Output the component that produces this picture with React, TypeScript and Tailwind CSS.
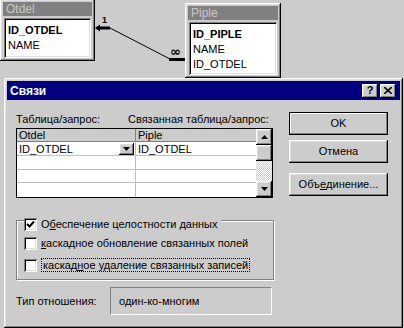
import React from 'react';

const raised = 'shadow-[inset_-1px_-1px_#000,inset_1px_1px_#fff,inset_-2px_-2px_#808080,inset_2px_2px_#dfdfdf]';
const sunken = 'shadow-[inset_1px_1px_#808080,inset_-1px_-1px_#fff,inset_2px_2px_#000,inset_-2px_-2px_#dfdfdf]';

const TableWindow: React.FC<{ title: string; fields: { name: string; key?: boolean }[]; className: string }> = ({ title, fields, className }) => (
  <div className={`absolute bg-[#cccccc] p-[3px] flex flex-col ${raised} ${className}`}>
    <div className="h-[14px] bg-[#808080] text-[#c8c8c8] text-[12px] leading-[14px] pl-[3px]">{title}</div>
    <div className={`mt-[2px] mx-[1px] flex-1 bg-white pt-[5px] pl-[4px] ${sunken}`}>
      {fields.map((f) => (
        <div key={f.name} className={`h-[15px] leading-[15px] text-[11px] text-black ${f.key ? 'font-bold' : ''}`}>
          {f.name}
        </div>
      ))}
    </div>
  </div>
);

const Checkbox: React.FC<{ checked?: boolean }> = ({ checked }) => (
  <div className={`w-[13px] h-[13px] bg-white shrink-0 flex items-center justify-center ${sunken}`}>
    {checked && (
      <svg width="9" height="9" viewBox="0 0 9 9">
        <polyline points="1,4 3.5,6.5 8,1.5" fill="none" stroke="#000" strokeWidth="2" />
      </svg>
    )}
  </div>
);

const Button: React.FC<{ children: React.ReactNode; isDefault?: boolean; className?: string }> = ({ children, isDefault, className = '' }) => (
  <div
    className={`h-[23px] w-[99px] flex items-center justify-center text-[11px] text-black ${
      isDefault ? 'border border-black shadow-[inset_-1px_-1px_#808080,inset_1px_1px_#fff]' : raised
    } ${className}`}
  >
    {children}
  </div>
);

export default function App() {
  return (
    <div className="w-[404px] h-[328px] bg-[#cccccc] overflow-hidden font-['Liberation_Sans',Arial,sans-serif] text-black">
      {/* relationship diagram */}
      <div className="relative h-[78px]">
        <TableWindow
          title="Otdel"
          className="left-0 -top-[1px] w-[95px] h-[62px]"
          fields={[{ name: 'ID_OTDEL', key: true }, { name: 'NAME' }]}
        />
        <TableWindow
          title="Piple"
          className="left-[185px] top-[3px] w-[96px] h-[75px]"
          fields={[{ name: 'ID_PIPLE', key: true }, { name: 'NAME' }, { name: 'ID_OTDEL' }]}
        />
        <svg className="absolute left-0 top-0" width="404" height="78">
          <polygon points="95,28 100,24.5 100,31.5" fill="#000" />
          <rect x="99" y="26.5" width="11" height="3" fill="#000" />
          <text x="102" y="23" fontSize="9" fontWeight="bold" fontFamily="Liberation Sans, Arial, sans-serif">1</text>
          <line x1="110" y1="28" x2="170" y2="59" stroke="#000" strokeWidth="1" />
          <rect x="169" y="58" width="16" height="3" fill="#000" />
          <text x="170" y="56" fontSize="13" fontWeight="bold" fontFamily="DejaVu Sans, sans-serif">∞</text>
        </svg>
      </div>

      {/* dialog */}
      <div className={`ml-[4px] w-[399px] h-[250px] p-[3px] bg-[#cccccc] ${raised}`}>
        <div className="h-[19px] bg-[#000080] flex items-center justify-between pl-[3px] pr-[4px]">
          <span className="text-white font-bold text-[12px]">Связи</span>
          <div className="flex gap-[2px]">
            <div className={`w-[16px] h-[14px] bg-[#cccccc] flex items-center justify-center text-[11px] font-bold leading-none ${raised}`}>?</div>
            <div className={`w-[16px] h-[14px] bg-[#cccccc] flex items-center justify-center ${raised}`}>
              <svg width="8" height="7" viewBox="0 0 8 7">
                <path d="M0 0 L8 7 M8 0 L0 7" stroke="#000" strokeWidth="1.6" />
              </svg>
            </div>
          </div>
        </div>

        <div className="flex pt-[12px] pl-[9px]">
          {/* left column */}
          <div className="w-[258px] flex flex-col">
            <div className="h-[14px] flex text-[11px] leading-[14px]">
              <span className="w-[112px]">Таблица/запрос:</span>
              <span>Связанная таблица/запрос:</span>
            </div>
            <div className="mt-[2px] w-[257px] h-[70px] border border-black flex bg-white">
              <div className="flex-1 flex flex-col">
                <div className="h-[13px] flex bg-[#cccccc] border-b border-[#808080] text-[11px] leading-[13px]">
                  <div className="w-[119px] pl-[2px] border-r border-[#808080]">Otdel</div>
                  <div className="flex-1 pl-[2px]">Piple</div>
                </div>
                {[0, 1, 2, 3].map((i) => (
                  <div key={i} className={`h-[14px] flex text-[11px] leading-[14px] ${i < 3 ? 'border-b border-[#c0c0c0]' : ''}`}>
                    <div className="w-[119px] pl-[2px] border-r border-[#c0c0c0] flex items-center justify-between">
                      <span>{i === 0 ? 'ID_OTDEL' : ''}</span>
                      {i === 0 && (
                        <div className={`w-[15px] h-[12px] bg-[#cccccc] flex items-center justify-center mr-[1px] ${raised}`}>
                          <svg width="7" height="4" viewBox="0 0 7 4">
                            <polygon points="0,0 7,0 3.5,4" fill="#000" />
                          </svg>
                        </div>
                      )}
                    </div>
                    <div className="flex-1 pl-[2px]">{i === 0 ? 'ID_OTDEL' : ''}</div>
                  </div>
                ))}
              </div>
              <div className="w-[16px] flex flex-col bg-[#cccccc]">
                <div className={`h-[16px] flex items-center justify-center ${raised}`}>
                  <svg width="7" height="4" viewBox="0 0 7 4">
                    <polygon points="3.5,0 7,4 0,4" fill="#000" />
                  </svg>
                </div>
                <div className={`h-[16px] ${raised}`} />
                <div className="flex-1 bg-[repeating-conic-gradient(#fff_0_25%,#cccccc_0_50%)] bg-[length:2px_2px]" />
                <div className={`h-[16px] flex items-center justify-center ${raised}`}>
                  <svg width="7" height="4" viewBox="0 0 7 4">
                    <polygon points="0,0 7,0 3.5,4" fill="#000" />
                  </svg>
                </div>
              </div>
            </div>

            {/* group box */}
            <div className="relative mt-[22px] h-[60px] w-[258px] border border-[#808080] shadow-[inset_1px_1px_#fff,1px_1px_#fff] flex flex-col gap-[8px] pt-[15px] pl-[7px]">
              <div className="absolute left-[7px] -top-[4px] h-[14px] pr-[4px] bg-[#cccccc] flex items-center gap-[4px] text-[11px]">
                <Checkbox checked />
                <span>О<u>б</u>еспечение целостности данных</span>
              </div>
              <div className="h-[14px] flex items-center gap-[4px] text-[11px]">
                <Checkbox />
                <span><u>к</u>аскадное обновление связанных полей</span>
              </div>
              <div className="h-[14px] flex items-center gap-[4px] text-[11px]">
                <Checkbox />
                <span className="border border-dotted border-black px-[1px] leading-[12px]">каскад<u>н</u>ое удаление связанных записей</span>
              </div>
            </div>

            <div className="mt-[7px] flex items-center text-[11px]">
              <span className="w-[94px]">Тип отношения:</span>
              <div className="w-[162px] h-[28px] flex items-center pl-[8px] border border-t-[#808080] border-l-[#808080] border-b-white border-r-white">
                один-ко-многим
              </div>
            </div>
          </div>

          {/* right column */}
          <div className="ml-[15px] flex flex-col">
            <Button isDefault>OK</Button>
            <Button className="mt-[5px]">Отмена</Button>
            <Button className="mt-[10px]">Объ<u>е</u>динение...</Button>
          </div>
        </div>
      </div>
    </div>
  );
}
